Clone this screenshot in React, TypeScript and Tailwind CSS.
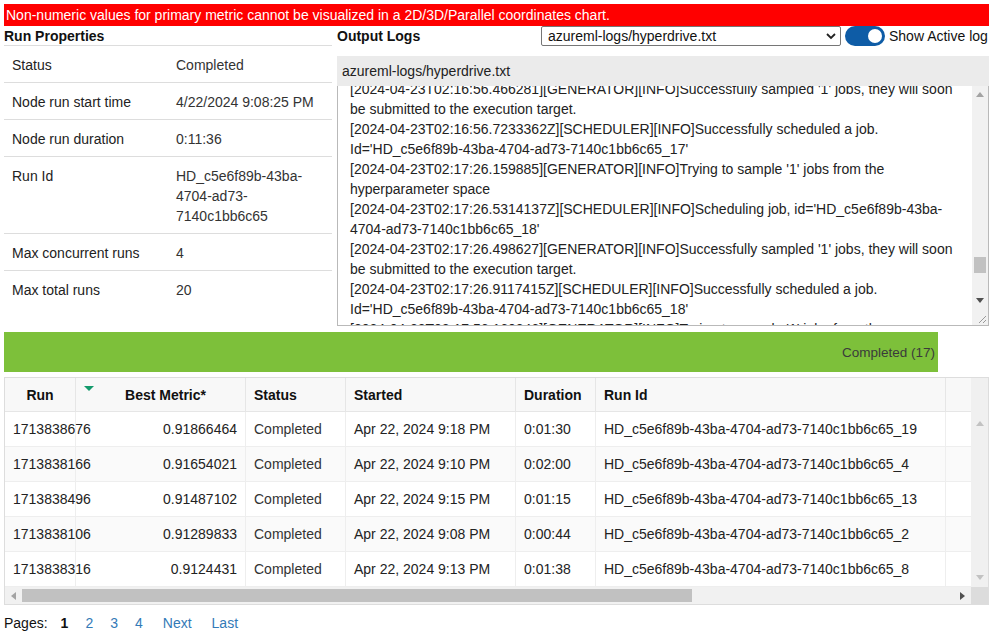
const font = { fontFamily: '"Liberation Sans", Arial, sans-serif' }

const props: [string, string[]][] = [
  ["Status", ["Completed"]],
  ["Node run start time", ["4/22/2024 9:08:25 PM"]],
  ["Node run duration", ["0:11:36"]],
  ["Run Id", ["HD_c5e6f89b-43ba-", "4704-ad73-", "7140c1bb6c65"]],
  ["Max concurrent runs", ["4"]],
  ["Max total runs", ["20"]],
]

const logLines = [
  "[2024-04-23T02:16:56.466281][GENERATOR][INFO]Successfully sampled '1' jobs, they will soon",
  "be submitted to the execution target.",
  "[2024-04-23T02:16:56.7233362Z][SCHEDULER][INFO]Successfully scheduled a job.",
  "Id='HD_c5e6f89b-43ba-4704-ad73-7140c1bb6c65_17'",
  "[2024-04-23T02:17:26.159885][GENERATOR][INFO]Trying to sample '1' jobs from the",
  "hyperparameter space",
  "[2024-04-23T02:17:26.5314137Z][SCHEDULER][INFO]Scheduling job, id='HD_c5e6f89b-43ba-",
  "4704-ad73-7140c1bb6c65_18'",
  "[2024-04-23T02:17:26.498627][GENERATOR][INFO]Successfully sampled '1' jobs, they will soon",
  "be submitted to the execution target.",
  "[2024-04-23T02:17:26.9117415Z][SCHEDULER][INFO]Successfully scheduled a job.",
  "Id='HD_c5e6f89b-43ba-4704-ad73-7140c1bb6c65_18'",
  "[2024-04-23T02:17:56.160846][GENERATOR][INFO]Trying to sample '1' jobs from the",
]

const runs = [
  ["1713838676", "0.91866464", "Completed", "Apr 22, 2024 9:18 PM", "0:01:30", "HD_c5e6f89b-43ba-4704-ad73-7140c1bb6c65_19"],
  ["1713838166", "0.91654021", "Completed", "Apr 22, 2024 9:10 PM", "0:02:00", "HD_c5e6f89b-43ba-4704-ad73-7140c1bb6c65_4"],
  ["1713838496", "0.91487102", "Completed", "Apr 22, 2024 9:15 PM", "0:01:15", "HD_c5e6f89b-43ba-4704-ad73-7140c1bb6c65_13"],
  ["1713838106", "0.91289833", "Completed", "Apr 22, 2024 9:08 PM", "0:00:44", "HD_c5e6f89b-43ba-4704-ad73-7140c1bb6c65_2"],
  ["1713838316", "0.9124431", "Completed", "Apr 22, 2024 9:13 PM", "0:01:38", "HD_c5e6f89b-43ba-4704-ad73-7140c1bb6c65_8"],
]

const cols = "grid grid-cols-[71px_170px_100px_170px_80px_350px_25px]"

const Tri = ({ dir, color = "#a3a3a3" }: { dir: "up" | "down" | "left" | "right"; color?: string }) => {
  const pts = {
    up: "0,5 4,0 8,5",
    down: "0,0 8,0 4,5",
    left: "5,0 5,8 0,4",
    right: "0,0 0,8 5,4",
  }[dir]
  const w = dir === "up" || dir === "down" ? 8 : 5
  const h = dir === "up" || dir === "down" ? 5 : 8
  return (
    <svg width={w} height={h} viewBox={`0 0 ${w} ${h}`}>
      <polygon points={pts} fill={color} />
    </svg>
  )
}

const RunProperties = () => (
  <div className="w-[328px] shrink-0">
    <div className="h-[20px] leading-5 font-bold text-[14px] text-[#111] border-b border-[#dddddd]">Run Properties</div>
    {props.map(([label, value], i) => (
      <div
        key={label}
        className={`flex pt-[9px] pb-[7px] text-[14px] leading-5 ${i < props.length - 1 ? "border-b border-[#dddddd]" : ""}`}
      >
        <div className="w-[164px] pl-2 text-[#222]">{label}</div>
        <div className="flex-1 pl-2 text-[#333]">
          {value.map((v) => (
            <div key={v}>{v}</div>
          ))}
        </div>
      </div>
    ))}
  </div>
)

const OutputLogs = () => (
  <div className="flex-1 min-w-0">
    <div className="flex items-center h-[20px]">
      <div className="w-[204px] font-bold text-[14px] text-[#111] leading-5">Output Logs</div>
      <div className="w-[300px] h-[20px] border border-[#767676] rounded-[2px] flex items-center justify-between pl-[6px] pr-[4px] text-[14px] text-[#111]">
        <span>azureml-logs/hyperdrive.txt</span>
        <svg width="10" height="7" viewBox="0 0 10 7">
          <polyline points="1,1 5,5 9,1" fill="none" stroke="#222" strokeWidth="1.8" />
        </svg>
      </div>
      <div className="ml-[4px] w-[40px] h-[20px] rounded-full bg-[#0e5ca6] flex items-center justify-end pr-[3px]">
        <div className="w-[14px] h-[14px] rounded-full bg-white" />
      </div>
      <div className="ml-[4px] text-[14px] text-[#111] whitespace-nowrap">Show Active log</div>
    </div>
    <div className="mt-[10px] h-[30px] bg-[#ebebeb] pl-[5px] pt-[1px] flex items-center text-[14px] text-[#222]">
      azureml-logs/hyperdrive.txt
    </div>
    <div className="w-[652px] h-[240px] border border-[#b9b9b9] border-t-0 flex">
      <div className="flex-1 overflow-hidden pl-[12px]">
        <div className="-mt-[7px] text-[14px] leading-5 text-[#222]">
          {logLines.map((l, i) => (
            <div key={i} className="whitespace-nowrap">{l}</div>
          ))}
        </div>
      </div>
      <div className="w-[16px] bg-[#f1f1f1] flex flex-col">
        <div className="h-[17px] flex items-center justify-center"><Tri dir="up" /></div>
        <div className="h-[154px]" />
        <div className="h-[16px] mx-[2px] bg-[#c1c1c1]" />
        <div className="flex-1" />
        <div className="h-[17px] flex items-center justify-center"><Tri dir="down" color="#505050" /></div>
        <div className="h-[16px] flex items-end justify-end bg-[#f1f1f1] pr-[2px] pb-[2px]">
          <svg width="8" height="8" viewBox="0 0 8 8">
            <line x1="1" y1="8" x2="8" y2="1" stroke="#999" />
            <line x1="5" y1="8" x2="8" y2="5" stroke="#999" />
          </svg>
        </div>
      </div>
    </div>
  </div>
)

const RunsTable = () => (
  <div className="mt-[5px] w-[985px] border border-[#dddddd] text-[14px]">
    <div className="flex">
      <div className="w-[966px]">
        <div className={`${cols} h-[34px] bg-[#f8f8f8] border-b border-[#e6e6e6] font-bold text-[#111]`}>
          <div className="border-r border-[#e6e6e6] flex items-center justify-center pt-[1px]">Run</div>
          <div className="border-r border-[#e6e6e6] flex items-center justify-center pt-[1px] relative">
            <span className="absolute left-[8px] top-[8px]">
              <svg width="10" height="5" viewBox="0 0 10 5"><polygon points="0,0 10,0 5,5" fill="#149a6c" /></svg>
            </span>
            <span className="pl-[10px]">Best Metric*</span>
          </div>
          <div className="border-r border-[#e6e6e6] flex items-center pl-2 pt-[1px]">Status</div>
          <div className="border-r border-[#e6e6e6] flex items-center pl-2 pt-[1px]">Started</div>
          <div className="border-r border-[#e6e6e6] flex items-center pl-2 pt-[1px]">Duration</div>
          <div className="border-r border-[#e6e6e6] flex items-center pl-2 pt-[1px]">Run Id</div>
          <div />
        </div>
        {runs.map((r, i) => (
          <div
            key={r[0]}
            className={`${cols} h-[35px] border-b border-[#eeeeee] text-[#222] ${i % 2 === 1 ? "bg-[#fafafa]" : "bg-white"}`}
          >
            <div className="border-r border-[#eeeeee] flex items-center pl-2 pt-[1px] whitespace-nowrap overflow-visible">{r[0]}</div>
            <div className="border-r border-[#eeeeee] flex items-center justify-end pr-2 pt-[1px]">{r[1]}</div>
            <div className="border-r border-[#eeeeee] flex items-center pl-2 pt-[1px] text-[#333]">{r[2]}</div>
            <div className="border-r border-[#eeeeee] flex items-center pl-2 pt-[1px]">{r[3]}</div>
            <div className="border-r border-[#eeeeee] flex items-center pl-2 pt-[1px]">{r[4]}</div>
            <div className="border-r border-[#eeeeee] flex items-center pl-2 pt-[1px] whitespace-nowrap">{r[5]}</div>
            <div />
          </div>
        ))}
      </div>
      <div className="w-[17px] bg-[#f0f0f0] flex flex-col">
        <div className="h-[35px]" />
        <div className="h-[20px] flex items-center justify-center"><Tri dir="up" color="#c2c2c2" /></div>
        <div className="flex-1" />
        <div className="h-[20px] flex items-center justify-center"><Tri dir="down" color="#c2c2c2" /></div>
      </div>
    </div>
    <div className="flex h-[17px]">
      <div className="w-[966px] bg-[#f1f1f1] flex items-center">
        <div className="w-[17px] flex items-center justify-center"><Tri dir="left" color="#a3a3a3" /></div>
        <div className="w-[670px] h-[13px] bg-[#c1c1c1]" />
        <div className="flex-1" />
        <div className="w-[17px] flex items-center justify-center"><Tri dir="right" color="#505050" /></div>
      </div>
      <div className="flex-1 bg-[#dcdcdc]" />
    </div>
  </div>
)

export default function App() {
  return (
    <div className="p-1 w-[998px] h-[642px] bg-white text-[#222]" style={font}>
      <div className="w-[985px] h-[22px] bg-[#ff0000] text-white text-[14px] leading-[22px] pl-[2px]">
        Non-numeric values for primary metric cannot be visualized in a 2D/3D/Parallel coordinates chart.
      </div>
      <div className="flex gap-[5px] w-[985px]">
        <RunProperties />
        <OutputLogs />
      </div>
      <div className="mt-[6px] w-[934px] h-[40px] bg-[#7dc03a] flex items-center justify-end pr-[3px] pt-[2px] text-[13.5px] text-[#3a3a3a]">
        Completed (17)
      </div>
      <RunsTable />
      <div className="mt-[8px] flex items-center text-[14px] leading-5">
        <span className="text-[#111]">Pages:</span>
        <span className="ml-[13px] font-bold text-[#111]">1</span>
        <span className="ml-[17px] text-[#337ab7]">2</span>
        <span className="ml-[17px] text-[#337ab7]">3</span>
        <span className="ml-[17px] text-[#337ab7]">4</span>
        <span className="ml-[20px] text-[#337ab7]">Next</span>
        <span className="ml-[20px] text-[#337ab7]">Last</span>
      </div>
    </div>
  )
}
